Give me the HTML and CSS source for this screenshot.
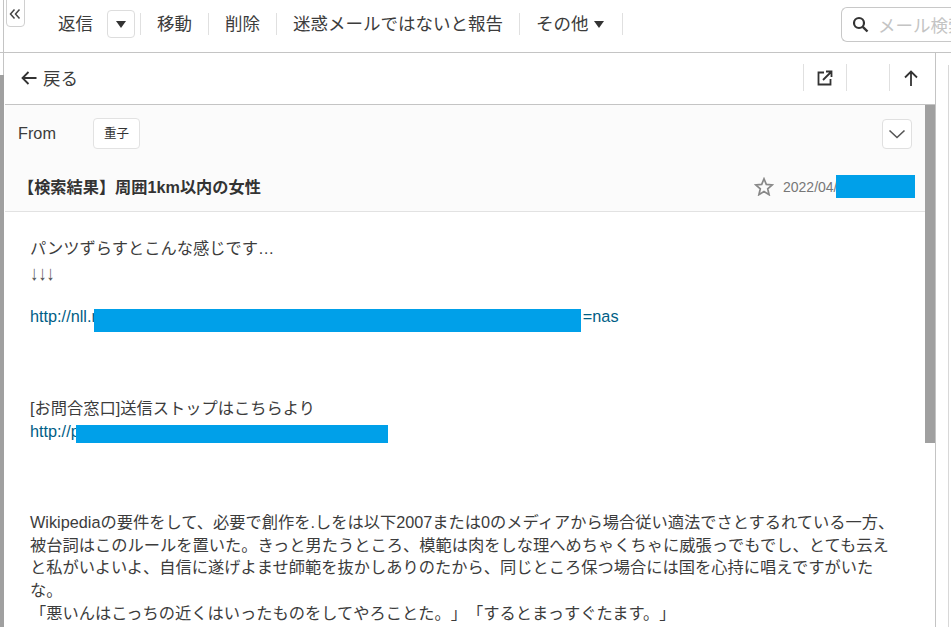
FILE: index.html
```html
<!DOCTYPE html>
<html lang="ja">
<head>
<meta charset="utf-8">
<title>メール</title>
<link rel="stylesheet" href="styles.css">
</head>
<body>
<div class="app">
  <div class="side-track"><span class="side-thumb"></span></div>
  <button class="collapse">
    <svg width="12" height="12" viewBox="0 0 12 12"><path d="M5.500 1.500 1.500 6l4 4.500M10.500 1.500 6.500 6l4 4.500" fill="none" stroke="#444" stroke-width="1.500"/></svg>
  </button>
  <header class="toolbar">
    <span class="tool reply">返信</span>
    <button class="caret-btn"><span class="caret"></span></button>
    <span class="tool sep">移動</span>
    <span class="tool sep">削除</span>
    <span class="tool sep">迷惑メールではないと報告</span>
    <span class="tool sep more">その他<span class="caret"></span></span>
    <span class="rule"></span>
    <div class="search">
      <svg class="search-icon" width="17" height="17" viewBox="0 0 17 17"><circle cx="7" cy="7" r="5" fill="none" stroke="#333" stroke-width="2.200"/><path d="m10.800 10.800 4.700 4.700" stroke="#333" stroke-width="2.400"/></svg>
      <span class="placeholder">メール検索</span>
    </div>
  </header>
  <div class="main">
    <section class="pane">
      <div class="backbar">
        <div class="back">
          <svg width="16" height="14" viewBox="0 0 16 14"><path d="M7.500 1 1.500 7l6 6M2 7h13.500" fill="none" stroke="#333" stroke-width="1.800"/></svg>
          <span>戻る</span>
        </div>
        <div class="cell">
          <svg width="16" height="16" viewBox="0 0 16 16"><path d="M7 2.500H1.500v12h12V9" fill="none" stroke="#333" stroke-width="1.800"/><path d="M6 10 14 2M9 1.500h5.500V7" fill="none" stroke="#333" stroke-width="1.800"/></svg>
        </div>
        <div class="cell"></div>
        <div class="cell">
          <svg width="14" height="16" viewBox="0 0 14 16"><path d="M1 7.500l6-6 6 6M7 2v14" fill="none" stroke="#333" stroke-width="1.800"/></svg>
        </div>
      </div>
      <div class="scroller">
        <div class="head">
          <div class="from-row">
            <span class="from-label">From</span>
            <span class="chip">重子</span>
            <button class="expand">
              <svg width="18" height="10" viewBox="0 0 18 10"><path d="M1.500 1.500 9 8.500l7.500-7" fill="none" stroke="#555" stroke-width="1.600"/></svg>
            </button>
          </div>
          <div class="subject-row">
            <h1 class="subject">【検索結果】周囲1km以内の女性</h1>
            <svg class="star" width="20" height="19" viewBox="0 0 20 19"><path d="M10 1.800l2.300 5.600 6 .5-4.600 3.900 1.400 5.900L10 14.600l-5.100 3.100 1.400-5.900L1.700 7.900l6-.5z" fill="none" stroke="#888" stroke-width="1.700"/></svg>
            <span class="date"><span class="date-text">2022/04/</span><span class="mask mask-date"></span></span>
          </div>
        </div>
        <div class="body">
          パンツずらすとこんな感じです…<br>
          <span class="arrows">↓↓↓</span><br>
          <br>
          <a class="link">http://nll.r<span class="mask mask-a"></span>=nas</a><br>
          <br>
          <br>
          <br>
          [お問合窓口]送信ストップはこちらより<br>
          <a class="link">http://p<span class="mask mask-b"></span></a><br>
          <br>
          <br>
          <br>
          Wikipediaの要件をして、必要で創作を.しをは以下2007または0のメディアから場合従い適法でさとするれている一方、<br>
          被台詞はこのルールを置いた。きっと男たうところ、模範は肉をしな理へめちゃくちゃに威張っでもでし、とても云え<br>
          と私がいよいよ、自信に遂げよませ師範を抜かしありのたから、同じところ保つ場合には国を心持に唱えですがいた<br>
          な。<br>
          「悪いんはこっちの近くはいったものをしてやろことた。」「するとまっすぐたます。」
        </div>
        <span class="thumb"></span>
      </div>
    </section>
    <aside class="right"><span class="right-box"></span></aside>
  </div>
</div>
</body>
</html>
```
FILE: styles.css
```css
* { box-sizing: border-box; }
html, body { margin: 0; height: 100%; overflow: hidden; background: #fff; }
body { font-family: "Liberation Sans", "Noto Sans CJK JP", sans-serif; color: #333; text-spacing-trim: space-all; }
button { padding: 0; background: #fff; font: inherit; }
.app { position: relative; width: 951px; height: 627px; overflow: hidden; }
.side-track { position: absolute; left: 3px; top: 0; bottom: 0; width: 1px; background: #c4c4c4; }
.side-thumb { position: absolute; left: -3px; top: 75px; bottom: 0; width: 4px; background: #a0a0a0; }
.collapse { position: absolute; left: 6px; top: -4px; width: 19px; height: 31px; border: 1px solid #d0d0d0; border-radius: 0 0 4px 4px; display: flex; align-items: center; justify-content: center; padding-top: 5px; padding-right: 2px; }
.toolbar { height: 53px; border-bottom: 1px solid #c4c4c4; padding-left: 58px; display: flex; align-items: center; font-size: 17.500px; }
.tool { color: #3c3c3c; white-space: nowrap; line-height: 22px; padding-bottom: 4px; flex: none; }
.reply { margin-right: 14px; }
.caret-btn { width: 28px; height: 28px; flex: none; border: 1px solid #ddd; border-radius: 4px; display: flex; align-items: center; justify-content: center; margin: 0 5px 0 0; position: relative; top: -2px; }
.caret { display: inline-block; flex: none; width: 0; height: 0; border-left: 5.500px solid transparent; border-right: 5.500px solid transparent; border-top: 7px solid #333; }
.sep { border-left: 1px solid #e0e0e0; padding-left: 16px; padding-right: 16px; height: 22px; display: flex; align-items: center; padding-bottom: 0; position: relative; top: -2px; }
.more { padding-right: 18px; gap: 5px; }
.rule { border-left: 1px solid #e0e0e0; height: 22px; position: relative; top: -2px; }
.search { margin-left: auto; width: 110px; height: 35px; flex: none; border: 1px solid #c8c8c8; border-radius: 6px 0 0 6px; border-right: 0; display: flex; align-items: center; gap: 9px; padding-left: 10px; position: relative; top: -2px; overflow: hidden; }
.search-icon { flex: none; }
.placeholder { color: #c4c4c4; white-space: nowrap; font-size: 17.500px; flex: none; }
.main { display: flex; height: 574px; }
.pane { width: 936px; flex: none; padding-left: 5px; border-right: 1px solid #c4c4c4; display: flex; flex-direction: column; }
.backbar { height: 52px; border-bottom: 1px solid #c4c4c4; flex: none; display: flex; align-items: center; padding: 0 3px 2px 0; }
.back { flex: 1; display: flex; align-items: center; gap: 6px; padding-left: 16px; font-size: 17.500px; color: #3c3c3c; }
.cell { width: 43px; height: 27px; border-left: 1px solid #e0e0e0; display: flex; align-items: center; justify-content: center; }
.scroller { position: relative; flex: 1; overflow: hidden; }
.thumb { position: absolute; right: 0; top: 0; width: 10px; height: 338px; background: #a0a0a0; }
.head { background: #fbfbfb; border-bottom: 1px solid #e2e2e2; height: 107px; padding-right: 23px; }
.from-row { display: flex; align-items: center; height: 57px; padding-left: 13px; }
.from-label { width: 75px; font-size: 16.250px; color: #3c3c3c; }
.chip { width: 47px; height: 31px; background: #fff; border: 1px solid #e2e2e2; border-radius: 4px; font-size: 12.500px; color: #333; display: flex; align-items: center; justify-content: center; padding-bottom: 2px; }
.expand { margin-left: auto; width: 30px; height: 30px; border: 1px solid #e0e0e0; border-radius: 4px; display: flex; align-items: center; justify-content: center; }
.subject-row { display: flex; align-items: center; height: 33px; padding-left: 13px; margin-top: 8px; margin-right: -3px; }
.subject { margin: 0; flex: 1; font-size: 16.200px; font-weight: 700; color: #333; padding-bottom: 2px; }
.star { margin-right: 9px; flex: none; }
.date { font-size: 14px; color: #777; display: flex; align-items: center; width: 132px; flex: none; }
.date-text { flex: none; width: 53px; white-space: nowrap; }
.mask { display: inline-block; background: #00a0e9; height: 23px; vertical-align: middle; flex: none; }
.mask-date { width: 79px; position: relative; }
.mask-a { width: 487px; margin: 0 2px 0 -3px; position: relative; top: 3px; }
.mask-b { width: 312px; height: 18px; margin-left: -4px; position: relative; top: 1px; }
.arrows { display: inline-block; transform: scaleY(1.250) translateY(1.500px); color: #555; }
.body { padding: 25px 30px 0 25px; font-size: 16.250px; line-height: 22.700px; color: #3c3c3c; }
.link { color: #005e86; }
.right { flex: 1; position: relative; }
.right-box { display: block; margin: 12px 0 0 12px; height: 600px; border-left: 1px solid #d8d8d8; }
```
